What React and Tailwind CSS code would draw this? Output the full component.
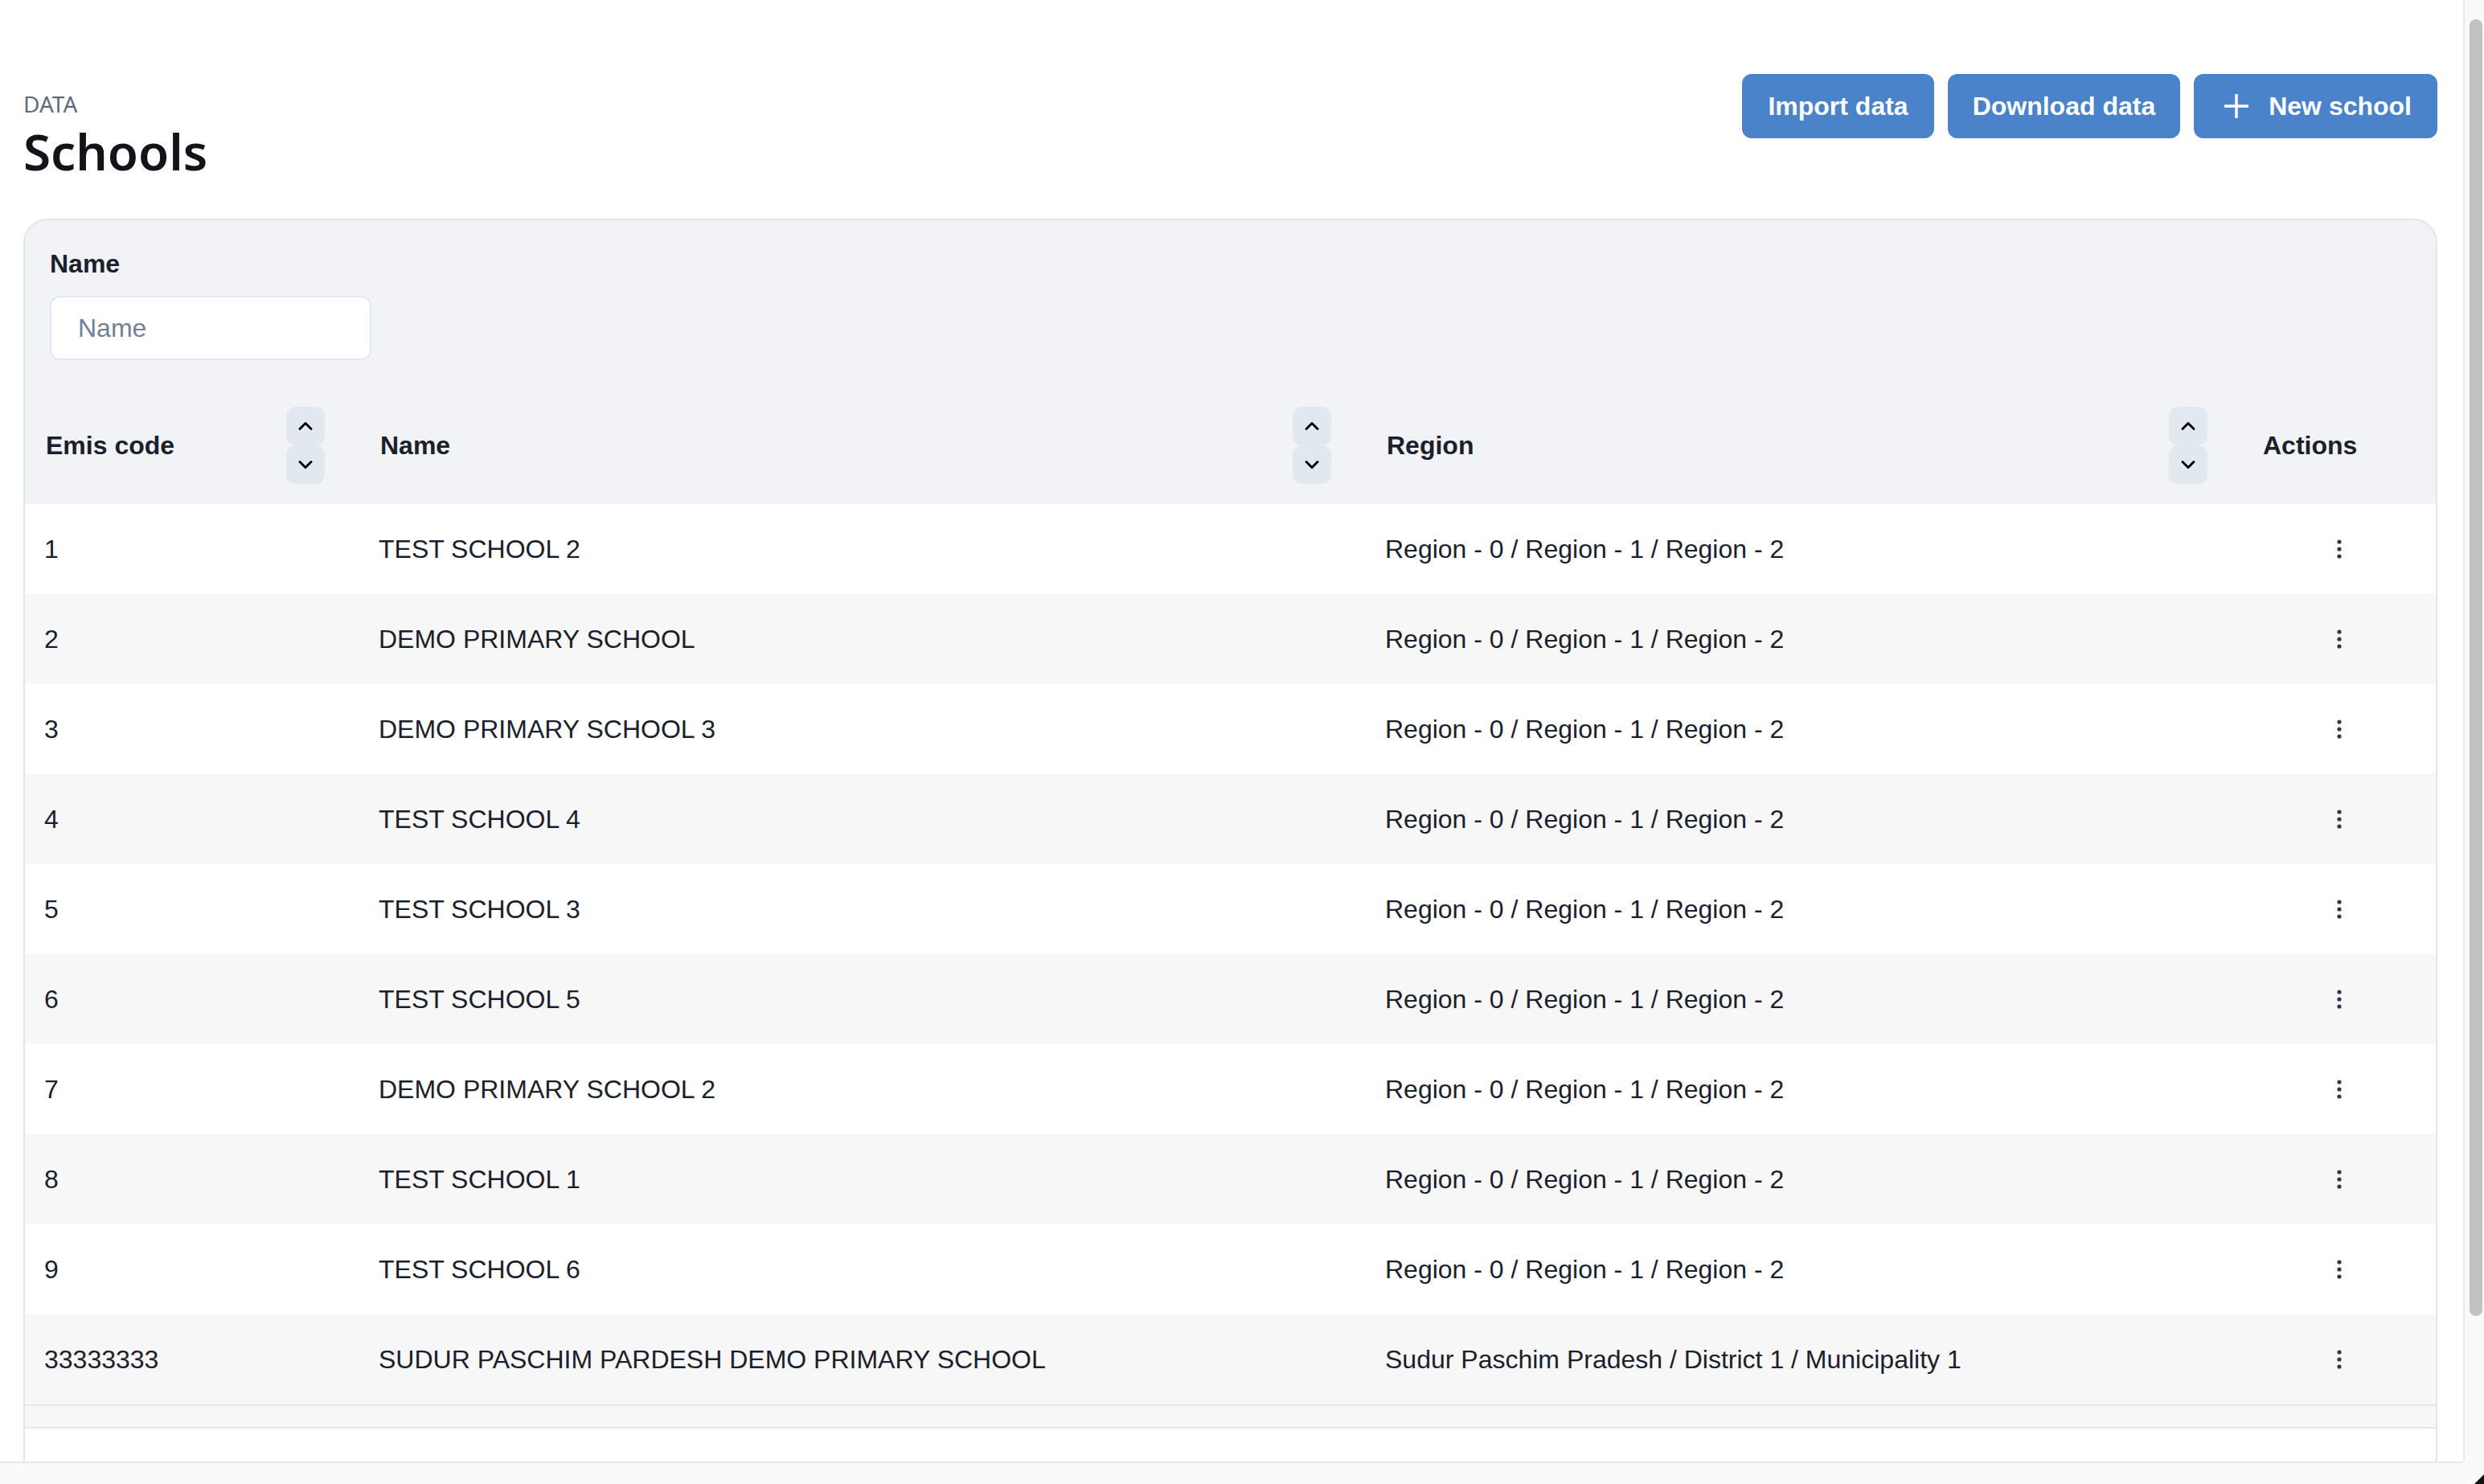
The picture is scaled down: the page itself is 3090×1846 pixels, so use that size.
import { ChevronUp, ChevronDown } from "lucide-react";

const SCHOOLS = [
  { code: "1", name: "TEST SCHOOL 2", region: "Region - 0 / Region - 1 / Region - 2" },
  { code: "2", name: "DEMO PRIMARY SCHOOL", region: "Region - 0 / Region - 1 / Region - 2" },
  { code: "3", name: "DEMO PRIMARY SCHOOL 3", region: "Region - 0 / Region - 1 / Region - 2" },
  { code: "4", name: "TEST SCHOOL 4", region: "Region - 0 / Region - 1 / Region - 2" },
  { code: "5", name: "TEST SCHOOL 3", region: "Region - 0 / Region - 1 / Region - 2" },
  { code: "6", name: "TEST SCHOOL 5", region: "Region - 0 / Region - 1 / Region - 2" },
  { code: "7", name: "DEMO PRIMARY SCHOOL 2", region: "Region - 0 / Region - 1 / Region - 2" },
  { code: "8", name: "TEST SCHOOL 1", region: "Region - 0 / Region - 1 / Region - 2" },
  { code: "9", name: "TEST SCHOOL 6", region: "Region - 0 / Region - 1 / Region - 2" },
  {
    code: "33333333",
    name: "SUDUR PASCHIM PARDESH DEMO PRIMARY SCHOOL",
    region: "Sudur Paschim Pradesh / District 1 / Municipality 1",
  },
];

const COLS = "grid grid-cols-[416px_1252px_1090px_1fr]";

function SortButtons() {
  return (
    <div className="flex flex-col">
      <button className="flex h-[48px] w-[48px] items-center justify-center rounded-[12px] bg-[#e2e8f0] text-black">
        <ChevronUp size={28} strokeWidth={2.5} />
      </button>
      <button className="flex h-[48px] w-[48px] items-center justify-center rounded-[12px] bg-[#e2e8f0] text-black">
        <ChevronDown size={28} strokeWidth={2.5} />
      </button>
    </div>
  );
}

function HeaderCell({ label, sortable }) {
  return (
    <div className="flex items-center justify-between pl-[26px] pr-[43px]">
      <span className="font-bold">{label}</span>
      {sortable && <SortButtons />}
    </div>
  );
}

function Kebab() {
  return (
    <svg width="8" height="28" viewBox="0 0 8 28" className="text-[#2d3748]">
      <circle cx="4" cy="5" r="2.6" fill="currentColor" />
      <circle cx="4" cy="14" r="2.6" fill="currentColor" />
      <circle cx="4" cy="23" r="2.6" fill="currentColor" />
    </svg>
  );
}

function Btn({ children, className = "" }) {
  return (
    <button
      className={`flex h-[80px] items-center rounded-[12px] bg-[#4a83c9] text-[32px] font-bold text-white ${className}`}
    >
      {children}
    </button>
  );
}

export default function App() {
  return (
    <div className="grid h-[1846px] w-[3090px] grid-cols-[1fr_26px] grid-rows-[1fr_28px] overflow-hidden bg-white font-['Liberation_Sans',Arial,sans-serif] text-[#1a202c]">
      {/* Page */}
      <div className="overflow-hidden pl-[29px] pr-[32px] pt-[92px]">
        <div className="flex items-start justify-between">
          <div className="pt-[16px] font-['Noto_Sans',sans-serif]">
            <div className="text-[28px] leading-[42px] text-[#5f6b7c]">DATA</div>
            <h1 className="text-[62px] font-semibold leading-[77px] text-[#111418]">Schools</h1>
          </div>
          <div className="flex gap-[17px]">
            <Btn className="px-[32px]">Import data</Btn>
            <Btn className="px-[31px]">Download data</Btn>
            <Btn className="gap-[24px] pl-[37px] pr-[32px]">
              <svg width="32" height="32" viewBox="0 0 32 32">
                <path d="M16 1v30M1 16h30" stroke="white" strokeWidth="3.5" />
              </svg>
              New school
            </Btn>
          </div>
        </div>

        {/* Card */}
        <div className="mt-[45px] rounded-t-[30px] border-[2px] border-[#e2e6ea] bg-[#f2f3f6]">
          <div className="px-[31px] pb-[32px] pt-[30px]">
            <div className="text-[32px] font-bold leading-[48px]">Name</div>
            <input
              placeholder="Name"
              className="mt-[16px] h-[80px] w-[400px] rounded-[13px] border-[2px] border-[#e2e8f0] bg-white pl-[33px] text-[32px] outline-none placeholder:text-[#718096]"
            />
          </div>

          <div className={`${COLS} h-[147px] text-[32px]`}>
            <HeaderCell label="Emis code" sortable />
            <HeaderCell label="Name" sortable />
            <HeaderCell label="Region" sortable />
            <div className="flex items-center pl-[26px]">
              <span className="font-bold">Actions</span>
            </div>
          </div>

          {SCHOOLS.map((s, i) => (
            <div
              key={s.code}
              className={`${COLS} h-[112px] items-center text-[32px] ${i % 2 ? "bg-[#f7f7f7]" : "bg-white"}`}
            >
              <div className="pl-[24px]">{s.code}</div>
              <div className="pl-[24px]">{s.name}</div>
              <div className="pl-[24px]">{s.region}</div>
              <div className="flex justify-center">
                <Kebab />
              </div>
            </div>
          ))}

          <div className="h-[30px] border-y-[2px] border-[#e6e6e6] bg-[#f7f7f7]" />
          <div className="h-[200px] bg-white" />
        </div>
      </div>

      {/* Vertical scrollbar */}
      <div className="border-l-[2px] border-[#e8e8e8] bg-[#fafafa] pl-[6px] pr-[2px] pt-[24px]">
        <div className="h-[1613px] rounded-full bg-[#c1c1c1]" />
      </div>

      {/* Horizontal scrollbar strip */}
      <div className="border-t-[2px] border-[#e8e8e8] bg-[#fafafa]" />
      <div className="flex items-end justify-end bg-[#fafafa]">
        <svg width="12" height="12" viewBox="0 0 12 12">
          <path d="M12 0v12H0z" fill="#111" />
        </svg>
      </div>
    </div>
  );
}
